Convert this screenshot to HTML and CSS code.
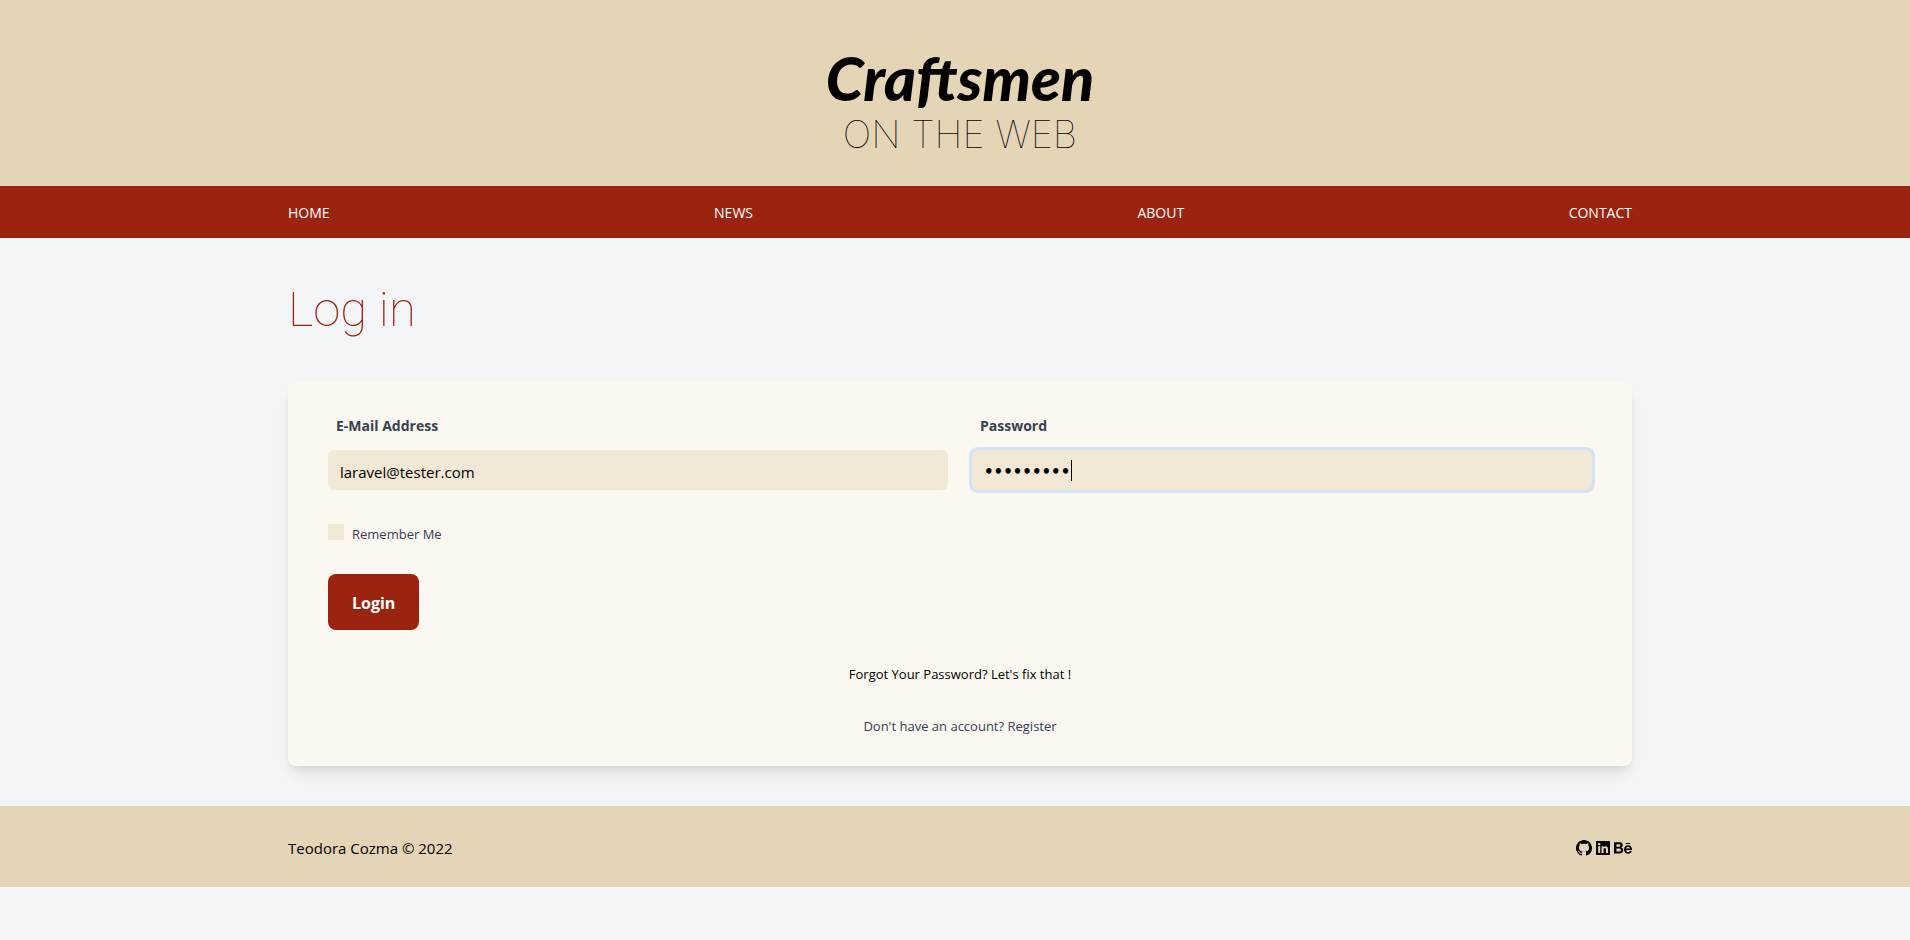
FILE: index.html
```html
<!DOCTYPE html>
<html lang="en">
<head>
<meta charset="utf-8">
<meta name="viewport" content="width=device-width, initial-scale=1">
<title>Craftsmen on the Web - Log in</title>
<link rel="stylesheet" href="styles.css">
</head>
<body>
<header class="masthead wrap">
  <a class="logo" href="#">
    <span class="logo-script">Craftsmen</span>
    <span class="logo-sub">ON THE WEB</span>
  </a>
</header>
<nav class="nav wrap" aria-label="Main">
  <a href="#">HOME</a>
  <a href="#">NEWS</a>
  <a href="#">ABOUT</a>
  <a href="#">CONTACT</a>
</nav>
<main class="main wrap">
  <h1 class="title">Log in</h1>
  <form class="card">
    <div class="fields">
      <div class="field">
        <label for="email">E-Mail Address</label>
        <input id="email" type="email" value="laravel@tester.com">
      </div>
      <div class="field">
        <label for="password">Password</label>
        <input id="password" type="password" value="password1" autofocus>
      </div>
    </div>
    <label class="remember"><input type="checkbox"><span>Remember Me</span></label>
    <button class="submit" type="button">Login</button>
    <div class="links">
      <a class="forgot" href="#">Forgot Your Password? Let's fix that !</a>
      <p class="register">Don't have an account? <a href="#">Register</a></p>
    </div>
  </form>
</main>
<footer class="footer wrap">
  <span>Teodora Cozma © 2022</span>
  <div class="social">
    <a href="#" aria-label="GitHub"><svg width="16" height="16" viewBox="0 0 16 16"><path d="M8 0C3.58 0 0 3.58 0 8c0 3.54 2.29 6.53 5.47 7.59.4.07.55-.17.55-.38 0-.19-.01-.82-.01-1.49-2.01.37-2.53-.49-2.69-.94-.09-.23-.48-.94-.82-1.13-.28-.15-.68-.52-.01-.53.63-.01 1.08.58 1.23.82.72 1.21 1.87.87 2.33.66.07-.52.28-.87.51-1.07-1.78-.2-3.64-.89-3.64-3.95 0-.87.31-1.59.82-2.15-.08-.2-.36-1.02.08-2.12 0 0 .67-.21 2.2.82.64-.18 1.32-.27 2-.27.68 0 1.36.09 2 .27 1.53-1.04 2.2-.82 2.2-.82.44 1.1.16 1.92.08 2.12.51.56.82 1.27.82 2.15 0 3.07-1.87 3.75-3.65 3.95.29.25.54.73.54 1.48 0 1.07-.01 1.93-.01 2.2 0 .21.15.46.55.38A8.013 8.013 0 0016 8c0-4.42-3.58-8-8-8z"/></svg></a>
    <a href="#" aria-label="LinkedIn"><svg width="14" height="16" viewBox="0 0 448 512"><path d="M416 32H31.9C14.3 32 0 46.5 0 64.3v383.4C0 465.5 14.3 480 31.9 480H416c17.6 0 32-14.5 32-32.3V64.3c0-17.8-14.4-32.3-32-32.3zM135.4 416H69V202.2h66.5V416zm-33.2-243c-21.3 0-38.5-17.3-38.5-38.5S80.9 96 102.2 96c21.2 0 38.5 17.3 38.5 38.5 0 21.3-17.2 38.5-38.5 38.5zm282.1 243h-66.4V312c0-24.8-.5-56.7-34.5-56.7-34.6 0-39.9 27-39.9 54.9V416h-66.4V202.2h63.7v29.2h.9c8.9-16.8 30.6-34.5 62.9-34.5 67.2 0 79.7 44.3 79.7 101.9V416z"/></svg></a>
    <a href="#" aria-label="Behance"><svg width="18" height="16" viewBox="0 0 576 512"><path d="M232 237.2c31.8-15.2 48.4-38.2 48.4-74 0-70.6-52.6-87.8-113.3-87.8H0v354.4h171.8c64.4 0 124.9-30.9 124.9-102.9 0-44.5-21.1-77.4-64.7-89.7zM77.9 135.9H151c28.1 0 53.4 7.9 53.4 40.5 0 30.1-19.7 42.2-47.5 42.2h-79v-82.7zm83.3 233.7H77.9V272h84.9c34.3 0 56 14.3 56 50.6 0 35.8-25.9 47-57.6 47zm358.5-240.7H376V94h143.7v34.9zM576 305.2c0-75.9-44.4-139.2-124.9-139.2-78.2 0-131.3 58.8-131.3 135.8 0 79.9 50.3 134.7 131.3 134.7 61.3 0 101-27.6 120.1-86.3H509c-6.7 21.9-34.3 33.5-55.7 33.5-41.3 0-63-24.2-63-65.3h185.1c.3-4.2.6-8.7.6-13.2zM390.4 274c2.3-33.7 24.7-54.8 58.5-54.8 35.4 0 53.2 20.8 56.2 54.8H390.4z"/></svg></a>
  </div>
</footer>
<script src="script.js"></script>
</body>
</html>
```
FILE: styles.css
```css
*, *::before, *::after { box-sizing: border-box; }
body {
  margin: 0;
  background: #f3f5f7;
  color: #000;
  font: 15px/24px "Open Sans", "Noto Sans", sans-serif;
}
a { color: inherit; text-decoration: none; }
.wrap { padding-left: 288px; padding-right: 278px; }
.masthead {
  display: flex;
  justify-content: center;
  padding-top: 44px;
  padding-bottom: 30px;
  background: #e5d5b7;
}
.logo { display: flex; flex-direction: column; align-items: center; }
.logo-script { font: italic 900 61px/68px Lato, sans-serif; }
.logo-sub { font: 100 38px/44px Inter, sans-serif; }
.nav {
  display: flex;
  justify-content: space-between;
  padding-top: 17px;
  padding-bottom: 15px;
  background: #9b2410;
  color: #fff;
  font-size: 14px;
  line-height: 20px;
}
.main { padding-top: 40px; padding-bottom: 40px; }
.title {
  margin: 0 0 40px;
  color: #9b2410;
  font: 100 49px/64px Roboto, sans-serif;
}
.card {
  display: flex;
  flex-direction: column;
  gap: 32px;
  padding: 32px 40px 30px;
  border-radius: 8px;
  background: #fbf8f1;
  box-shadow: 0 10px 15px -3px rgba(0, 0, 0, .1), 0 4px 6px -2px rgba(0, 0, 0, .05);
  color: #374151;
  font-size: 13px;
  line-height: 20px;
}
.fields { display: grid; grid-template-columns: 1fr 1fr; gap: 24px; }
.field { display: flex; flex-direction: column; gap: 14px; }
.field label { padding: 2px 0 0 8px; font-size: 14px; font-weight: 700; }
.field input {
  width: 100%;
  height: 40px;
  padding: 10px 12px 6px;
  border: 0;
  border-radius: 6px;
  outline: 0;
  background: #f1e8d5;
  color: #000;
  font: inherit;
  font-size: 15px;
}
.field input[type="password"] { font-family: "DejaVu Sans", sans-serif; font-weight: 700; }
.field input:focus { box-shadow: 0 0 0 3px #d3e2f8; }
/* steady caret in place of the blinking one */
.field input[type="password"]:focus {
  caret-color: transparent;
  background: linear-gradient(#000, #000) 99px 10px / 1px 21px no-repeat #f1e8d5;
}
.remember { display: flex; align-items: center; gap: 8px; align-self: flex-start; }
.remember input { appearance: none; width: 16px; height: 16px; margin: 0; background: #f1e8d5; }
.remember span { padding-top: 2px; margin-bottom: -2px; }
.submit {
  align-self: flex-start;
  padding: 17px 24px 15px;
  border: 0;
  border-radius: 8px;
  background: #9b2410;
  color: #fff;
  font: inherit;
  font-size: 16px;
  line-height: 24px;
  font-weight: 700;
}
.links { display: flex; flex-direction: column; align-items: center; gap: 32px; padding-top: 2px; }
.forgot { color: #000; }
.register { margin: 0; }
.footer {
  display: flex;
  justify-content: space-between;
  align-items: center;
  padding-top: 30px;
  padding-bottom: 27px;
  background: #e5d5b7;
}
.social { display: flex; gap: 4px; }
.social svg { display: block; }
```
FILE: script.js
```js
const password = document.getElementById("password");
password.focus();
password.setSelectionRange(password.value.length, password.value.length);
```
